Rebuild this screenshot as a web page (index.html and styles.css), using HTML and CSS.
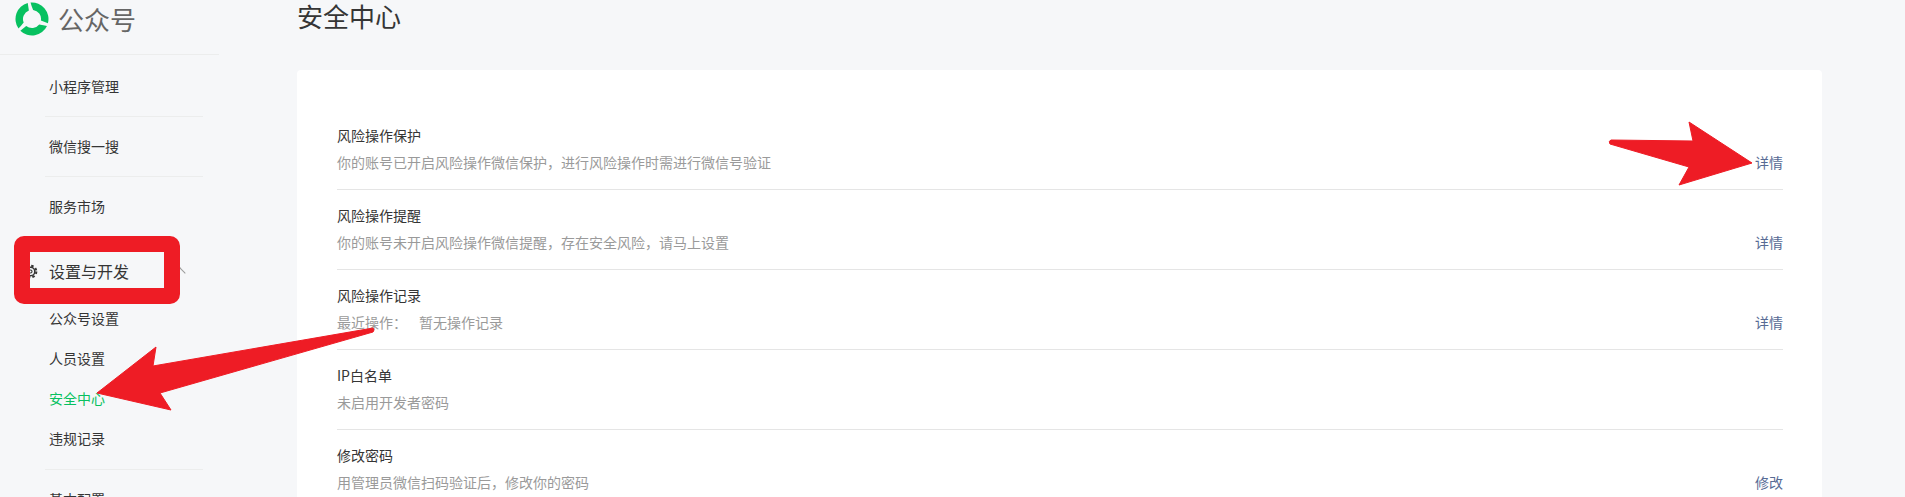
FILE: index.html
```html
<!DOCTYPE html>
<html lang="zh-CN">
<head>
    <meta charset="UTF-8">
    <meta name="viewport" content="width=device-width, initial-scale=1.0">
    <title>安全中心</title>
    <link rel="stylesheet" href="styles.css">
</head>
<body>
    <div class="page">
        <aside class="sidebar">
            <div class="brand">
                <svg class="brand-logo" viewBox="0 0 34 34" width="34" height="34">
                    <defs>
                        <path id="swoosh" d="M10 2.05A16.5 16.5 0 0 1 33.43 15.56L25.9 15.4A9 9 0 0 0 15 8.2Q12 5 10 2.05Z"/>
                    </defs>
                    <g fill="#07c160" transform="rotate(20 17 17)">
                        <use href="#swoosh"/>
                        <use href="#swoosh" transform="rotate(120 17 17)"/>
                        <use href="#swoosh" transform="rotate(240 17 17)"/>
                    </g>
                </svg>
                <span class="brand-name">公众号</span>
            </div>
            <ul class="nav">
                <li class="nav-item nav-line">小程序管理</li>
                <li class="nav-item nav-line">微信搜一搜</li>
                <li class="nav-item">服务市场</li>
                <li class="nav-group">
                    <div class="group-title">
                        <svg class="group-gear" viewBox="0 0 16 16" width="15" height="15">
                            <circle cx="8" cy="8" r="4.6" fill="none" stroke="#353535" stroke-width="1.6"/>
                            <circle cx="8" cy="8" r="6.2" fill="none" stroke="#353535" stroke-width="2.2" stroke-dasharray="2.6 2.27"/>
                            <circle cx="8" cy="8" r="1.6" fill="none" stroke="#353535" stroke-width="1.2"/>
                        </svg>
                        设置与开发
                        <span class="group-arrow"></span>
                    </div>
                    <div class="sub-item">公众号设置</div>
                    <div class="sub-item">人员设置</div>
                    <div class="sub-item sub-active">安全中心</div>
                    <div class="sub-item">违规记录</div>
                </li>
                <li class="nav-item">基本配置</li>
            </ul>
        </aside>

        <main class="main">
            <h2 class="page-title">安全中心</h2>
            <section class="card">
                <div class="row">
                    <div>
                        <div class="row-title">风险操作保护</div>
                        <div class="row-desc">你的账号已开启风险操作微信保护，进行风险操作时需进行微信号验证</div>
                    </div>
                    <a class="row-link">详情</a>
                </div>
                <div class="row">
                    <div>
                        <div class="row-title">风险操作提醒</div>
                        <div class="row-desc">你的账号未开启风险操作微信提醒，存在安全风险，请马上设置</div>
                    </div>
                    <a class="row-link">详情</a>
                </div>
                <div class="row">
                    <div>
                        <div class="row-title">风险操作记录</div>
                        <div class="row-desc"><span class="desc-label">最近操作：</span>暂无操作记录</div>
                    </div>
                    <a class="row-link">详情</a>
                </div>
                <div class="row">
                    <div>
                        <div class="row-title">IP白名单</div>
                        <div class="row-desc">未启用开发者密码</div>
                    </div>
                </div>
                <div class="row">
                    <div>
                        <div class="row-title">修改密码</div>
                        <div class="row-desc">用管理员微信扫码验证后，修改你的密码</div>
                    </div>
                    <a class="row-link">修改</a>
                </div>
            </section>
        </main>
    </div>

    <!-- red marks drawn over the page -->
    <div class="mark-box"></div>
    <svg class="marks" viewBox="0 0 1905 497" width="1905" height="497">
        <path fill="#ee1c25" stroke="#ee1c25" stroke-linejoin="round" d="M1611 140L1693 141L1689 122L1752 163L1679 185L1689 167L1610 144Q1608 141 1611 140Z"/>
        <path fill="#ee1c25" stroke="#ee1c25" stroke-linejoin="round" d="M373 328L153 366L156 347L97 393L171 410L160 393L373 332Q375 330 373 328Z"/>
    </svg>
</body>
</html>
```

FILE: styles.css
```css
html, body {
    margin: 0;
    height: 100%;
    overflow: hidden;
}

body {
    font-family: "Noto Sans CJK SC", "Liberation Sans", sans-serif;
    background-color: #f6f7f9;
    color: #353535;
    font-size: 14px;
}

.page {
    display: flex;
    height: 497px;
    overflow: hidden;
}

.sidebar {
    width: 219px;
    flex-shrink: 0;
}

.brand {
    display: flex;
    align-items: center;
    gap: 9px;
    height: 55px;
    padding: 0 0 16px 15px;
    box-sizing: border-box;
    border-bottom: 1px solid #eceded;
}

.brand-logo {
    flex-shrink: 0;
}

.brand-name {
    font-size: 26px;
    line-height: 32px;
    color: #666;
}

.nav {
    list-style: none;
    margin: 2px 0 0 45px;
    padding: 0;
    width: 158px;
}

.nav-item {
    height: 60px;
    line-height: 58px;
    padding-left: 4px;
    box-sizing: border-box;
}

.nav-line {
    border-bottom: 1px solid #eceded;
}

.nav-group {
    border-bottom: 1px solid #eceded;
    padding-bottom: 10px;
}

.group-title {
    position: relative;
    padding: 23px 0 17px 4px;
    font-size: 16px;
    line-height: 22px;
}

.group-gear {
    position: absolute;
    left: -22px;
    top: 27px;
}

.group-arrow {
    position: absolute;
    right: 19px;
    top: 32px;
    width: 7px;
    height: 7px;
    border-top: 1px solid #9a9a9a;
    border-left: 1px solid #9a9a9a;
    transform: rotate(45deg);
}

.sub-item {
    height: 40px;
    line-height: 38px;
    padding-left: 4px;
}

.sub-active {
    color: #07c160;
}

.main {
    flex: 1;
    padding: 0 83px 0 78px;
}

.page-title {
    margin: 0;
    font-size: 26px;
    font-weight: normal;
    line-height: 32px;
}

.card {
    margin-top: 38px;
    padding: 40px 39px 0 40px;
    background-color: #fff;
    border-radius: 4px;
}

.row {
    display: flex;
    justify-content: space-between;
    align-items: flex-end;
    height: 80px;
    padding: 15px 0 17px;
    box-sizing: border-box;
    border-bottom: 1px solid #e5e5e5;
}

.row-title {
    line-height: 20px;
    margin-bottom: 7px;
}

.row-desc {
    line-height: 20px;
    color: #9a9a9a;
}

.desc-label {
    display: inline-block;
    width: 82px;
}

.row-link {
    line-height: 20px;
    color: #576b95;
}

.mark-box {
    position: absolute;
    left: 14px;
    top: 236px;
    width: 134px;
    height: 36px;
    border: 16px solid #ee1c25;
    border-radius: 10px;
}

.marks {
    position: absolute;
    left: 0;
    top: 0;
    pointer-events: none;
}
```
